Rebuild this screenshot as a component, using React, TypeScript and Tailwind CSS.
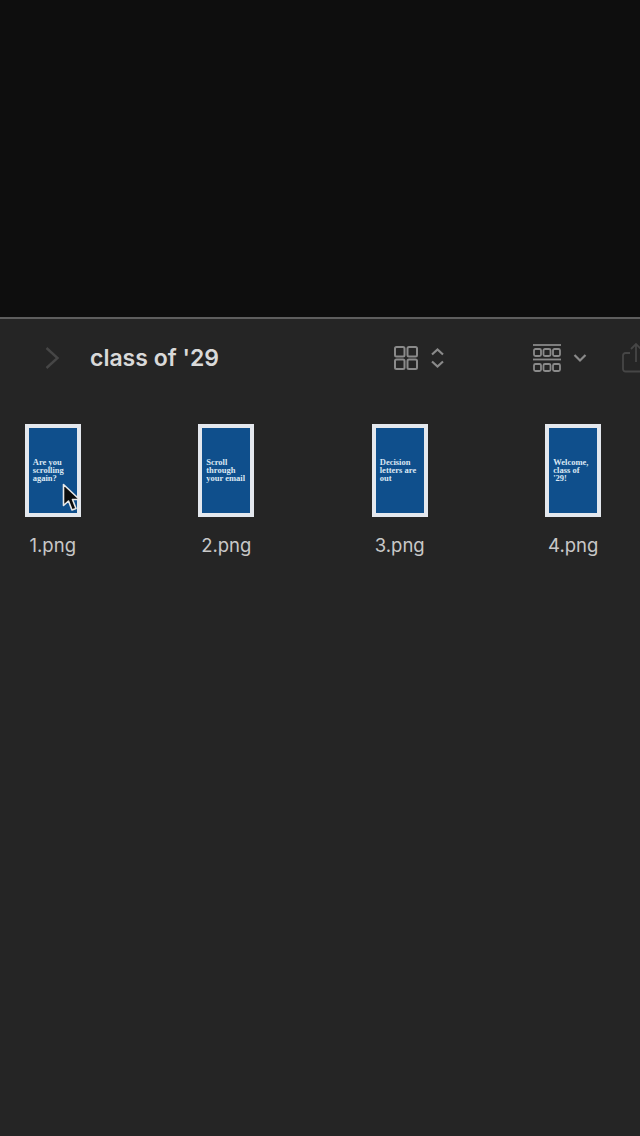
const files = [
  { name: "1.png", lines: ["Are you", "scrolling", "again?"] },
  { name: "2.png", lines: ["Scroll", "through", "your email"] },
  { name: "3.png", lines: ["Decision", "letters are", "out"] },
  { name: "4.png", lines: ["Welcome,", "class of", "'29!"] },
];

function ChevronRight() {
  return (
    <svg width="16" height="24" viewBox="0 0 16 24" fill="none" className="ml-[44px] shrink-0">
      <path d="M2.5 2 L13.5 12 L2.5 22" stroke="#464646" strokeWidth="2.4" />
    </svg>
  );
}

function GridIcon() {
  return (
    <svg width="26" height="26" viewBox="0 0 26 26" fill="none" stroke="#8a8a8a" strokeWidth="2">
      <rect x="2" y="2" width="9.5" height="9.5" rx="1.5" />
      <rect x="14.5" y="2" width="9.5" height="9.5" rx="1.5" />
      <rect x="2" y="14.5" width="9.5" height="9.5" rx="1.5" />
      <rect x="14.5" y="14.5" width="9.5" height="9.5" rx="1.5" />
    </svg>
  );
}

function UpDownIcon() {
  return (
    <svg width="15" height="24" viewBox="0 0 15 24" fill="none" stroke="#8a8a8a" strokeWidth="2.2">
      <path d="M2 8.5 L7.5 3.5 L13 8.5" />
      <path d="M2 15.5 L7.5 20.5 L13 15.5" />
    </svg>
  );
}

function GroupIcon() {
  return (
    <svg width="30" height="30" viewBox="0 0 30 30" fill="none" stroke="#8a8a8a" strokeWidth="1.8">
      <path d="M1 2 H29" />
      <rect x="2" y="6" width="7" height="7" rx="1.5" />
      <rect x="11.5" y="6" width="7" height="7" rx="1.5" />
      <rect x="21" y="6" width="7" height="7" rx="1.5" />
      <path d="M1 16.5 H29" />
      <rect x="2" y="21" width="7" height="7" rx="1.5" />
      <rect x="11.5" y="21" width="7" height="7" rx="1.5" />
      <rect x="21" y="21" width="7" height="7" rx="1.5" />
    </svg>
  );
}

function ChevronDown() {
  return (
    <svg width="14" height="10" viewBox="0 0 14 10" fill="none" stroke="#8a8a8a" strokeWidth="2.2">
      <path d="M1.5 2 L7 7.5 L12.5 2" />
    </svg>
  );
}

function ShareIcon() {
  return (
    <svg width="20" height="32" viewBox="0 0 20 32" fill="none" stroke="#464646" strokeWidth="1.8" className="shrink-0">
      <path d="M8 11 H3.5 A2.5 2.5 0 0 0 1 13.5 V27 A2.5 2.5 0 0 0 3.5 29.5 H20" />
      <path d="M20 11 H18" />
      <path d="M14 20 V2 M9 7 L14 2 L20 8" />
    </svg>
  );
}

function Cursor() {
  return (
    <svg width="20" height="30" viewBox="0 0 20 30" className="absolute left-[33px] top-[55px]">
      <path
        d="M1.5 1.5 V22.5 L6.5 18 L10 27 L14 25.5 L10.5 16.5 L17.5 16.5 Z"
        fill="#0c0c0c"
        stroke="#e8e8e8"
        strokeWidth="1.6"
        strokeLinejoin="round"
      />
    </svg>
  );
}

export default function App() {
  return (
    <div className="w-[640px] h-[1136px] overflow-hidden bg-[#252525] flex flex-col font-['Inter',sans-serif]">
      <div className="h-[317px] bg-[#0e0e0e] shrink-0" />
      <div className="h-[2px] bg-[#5e5e5e] shrink-0" />

      {/* toolbar */}
      <div className="h-[78px] flex items-center shrink-0">
        <ChevronRight />
        <span className="ml-[30px] w-[303px] shrink-0 text-[23px] font-semibold text-[#d9d9d9] whitespace-nowrap">
          class of '29
        </span>
        <div className="flex items-center gap-[11px] shrink-0">
          <GridIcon />
          <UpDownIcon />
        </div>
        <div className="ml-[87px] flex items-center gap-[11px] shrink-0">
          <GroupIcon />
          <ChevronDown />
        </div>
        <div className="ml-[35px] shrink-0">
          <ShareIcon />
        </div>
      </div>

      {/* files */}
      <div className="flex ml-[-34px] mt-[27px]">
        {files.map((file, i) => (
          <div key={file.name} className="w-[173.5px] shrink-0 flex flex-col items-center">
            <div className="relative w-[56px] h-[93px] border-[4px] border-[#e4e8ee] bg-[#0f4f8c] flex flex-col justify-center pl-[4px] pb-[2px]">
              {file.lines.map((line) => (
                <span
                  key={line}
                  className="font-['Liberation_Serif',serif] font-bold text-[8.5px] leading-[8px] text-[#dbe8f4] whitespace-nowrap"
                >
                  {line}
                </span>
              ))}
              {i === 0 && <Cursor />}
            </div>
            <span className="mt-[16px] text-[18.5px] leading-[24px] text-[#c8c8c8]">{file.name}</span>
          </div>
        ))}
      </div>
    </div>
  );
}
